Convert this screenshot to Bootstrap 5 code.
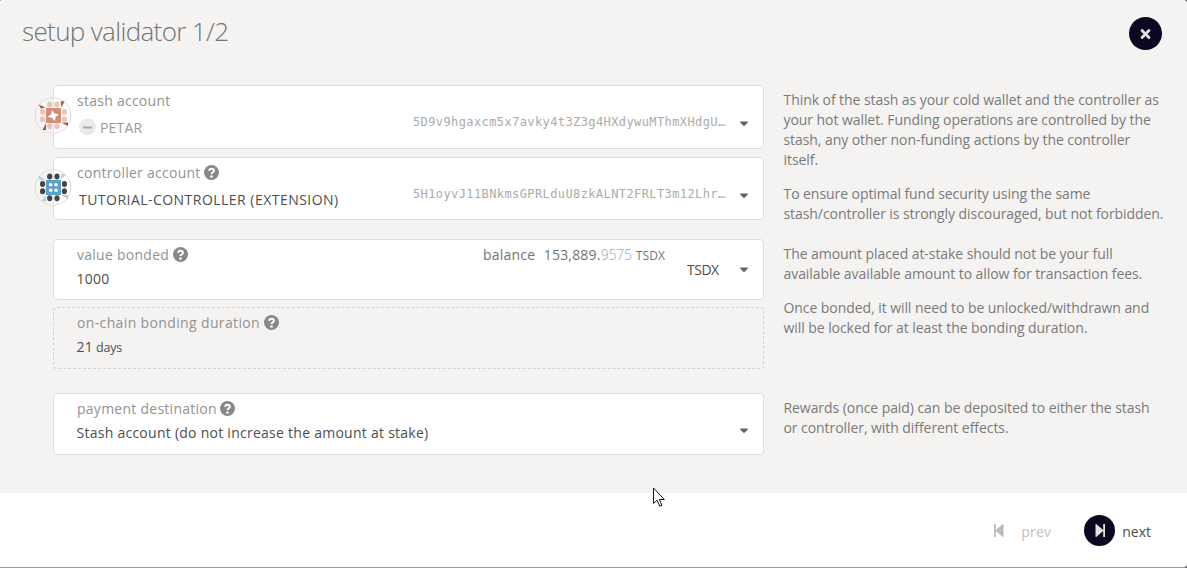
<!DOCTYPE html>
<html lang="en">
<head>
<meta charset="utf-8">
<meta name="viewport" content="width=device-width, initial-scale=1">
<title>setup validator 1/2</title>
<link rel="stylesheet" href="https://cdn.jsdelivr.net/npm/bootstrap@5.3.0/dist/css/bootstrap.min.css">
<style>
body{width:1187px;height:568px;overflow:hidden;font-family:"Open Sans","Noto Sans",sans-serif;font-size:14px;line-height:20px;color:#4e4e4e;background:#55525c}
.wizard{height:568px;border-bottom:1px solid #999;background:#fff;border-radius:2px 4px 4px 0;overflow:hidden}
.wizard-body{height:493px;background:#f4f3f2}
.wizard-head{height:85px;padding:14px 25px 0 22px}
.wizard-head h1{font-size:26px;font-weight:300;line-height:34px;letter-spacing:-.65px;color:#737373}
.round-btn{border:0;padding:0;border-radius:50%;background:#0d0821;display:flex;align-items:center;justify-content:center;flex:none}
.btn-close-round{width:33px;height:33px;margin-top:3px}
.btn-next{width:31px;height:31px}
.form-row{padding-left:53px;gap:19.500px}
.form-tall{height:154px}
.fields{width:711px;flex:none;letter-spacing:.26px}
.field{position:relative;background:#fff;border:1px solid #dededf;border-radius:4px;padding:5px 0 0 23px}
.h64{height:64px}.h63{height:63px}.h62{height:62px}.h61{height:61px}
.field.dashed{background:transparent;border:1px dashed #d2d2d1}
.fld-label{color:#929292;height:20px;gap:4px}
.fld-label svg{position:relative;top:-1px;left:-.5px}
.fld-value{margin:4px 0 0 -.5px}
.account{margin:7px 0 0 2px;letter-spacing:.47px}
.petar{height:20px;gap:4px;color:#9a9a9a;letter-spacing:.2px}
.on-chain{letter-spacing:.36px}
.help-txt{color:#7a7a7a;letter-spacing:-.065px;padding-top:5px}
.help-txt p{margin:0 0 14px;white-space:nowrap}
.ident{position:absolute;left:-20px;top:10px}
.caret{position:absolute;right:15px;width:8px;height:5px}
.caret-acct{top:35px}.caret-unit{top:27px}.caret-pay{top:34px}
.addr{position:absolute;left:359px;top:26px;font-family:"DejaVu Sans Mono",monospace;font-size:12px;letter-spacing:.4px;color:#ababab;white-space:nowrap}
.bal{position:absolute;left:429px;top:5px;color:#747474;white-space:nowrap;letter-spacing:.2px}
.bal .whole{margin-left:8.500px}
.bal .frac{color:#a6a6a6;font-weight:300;letter-spacing:-.2px}
.bal .tok{font-size:12px;margin-left:4px;letter-spacing:.1px}
.unit{position:absolute;left:633px;top:20px;letter-spacing:-.5px}
.days{font-size:12.500px;margin-left:3px;letter-spacing:-.2px}
.wizard-foot{height:74px;padding-right:36px}
.prev-txt{color:#c0c0c0;margin:3px 33px 0 16px;letter-spacing:.2px}
.next-txt{margin:3px 0 0 7px}
.cursor{position:absolute;left:653px;top:487px}
</style>
</head>
<body>
<svg class="d-none">
  <symbol id="help" viewBox="0 0 16 16"><circle cx="8" cy="8" r="8" fill="#888"/><path d="M5.500 6.300C5.600 4.600 6.600 4 8 4s2.600.7 2.600 2.200C10.600 7.900 8 7.700 8 9.500" fill="none" stroke="#fff" stroke-width="2.100"/><circle cx="8" cy="12.200" r="1.350" fill="#fff"/></symbol>
  <symbol id="caret" viewBox="0 0 8 5"><path fill="#666" d="M.5.500h7q.8.500 0 1.200L5 4.500q-1 .6-2 0L.5 1.700Q-.3 1 .5.500z"/></symbol>
  <symbol id="dots" viewBox="34 96 38 38"><ellipse cx="49.700" cy="104.500" rx="2.600" ry="3"/><ellipse cx="57" cy="104.500" rx="2.600" ry="3"/><ellipse cx="49.700" cy="126.300" rx="2.600" ry="3"/><ellipse cx="57" cy="126.300" rx="2.600" ry="3"/><ellipse cx="42.600" cy="112" rx="2.600" ry="3"/><ellipse cx="42.600" cy="119.200" rx="2.600" ry="3"/><ellipse cx="64.400" cy="112" rx="2.600" ry="3"/><ellipse cx="64.400" cy="119.200" rx="2.600" ry="3"/></symbol>
</svg>
<main class="wizard d-flex flex-column position-relative">
<div class="wizard-body">
  <header class="wizard-head d-flex justify-content-between align-items-start">
    <h1 class="m-0">setup validator 1/2</h1>
    <button class="round-btn btn-close-round" aria-label="close"><svg width="13" height="12" viewBox="0 0 13 12"><path d="M3 2.400 10 9.600M10 2.400 3 9.600" stroke="#e2e1e4" stroke-width="2.800" stroke-linecap="round"/></svg></button>
  </header>

  <section class="form-row form-tall d-flex">
    <div class="fields d-flex flex-column gap-2">
      <div class="field h64">
        <svg class="ident" width="38" height="38" viewBox="34 96 38 38"><circle cx="53" cy="115.500" r="17.800" fill="#fff" fill-opacity=".2" stroke="#dcdcdc"/><g fill="#a9553c"><path d="M38.500 104.500 45.500 107.500l-4.500.9zM60.700 101.200h3.800l-3 6.300zM68 122.600v3.500l-6.500-3.300zM42.500 130l3.500-7v7z"/></g><use href="#dots" x="34" y="96" width="38" height="38" fill="#e9c4ba"/><path fill="#d58c78" d="M46 108h15v15H46z"/><path fill="#fff" d="m52 110.200 2.400 3 4.400 1.400-3 2.200-1.200 4.200-2.500-3-4.400-1.200 3.200-2.200z"/></svg>
        <div class="fld-label d-flex align-items-center"><span>stash account</span></div>
        <div class="account petar d-flex align-items-center"><svg width="17" height="18" viewBox="0 0 17 18"><circle cx="8.500" cy="8" r="8.500" fill="#eae9e8"/><path d="M4 8.500h9" stroke="#aaa" stroke-width="2"/></svg><span>PETAR</span></div>
        <div class="addr">5D9v9hgaxcm5x7avky4t3Z3g4HXdywuMThmXHdgU…</div>
        <svg class="caret caret-acct"><use href="#caret"/></svg>
      </div>
      <div class="field h63">
        <svg class="ident" width="38" height="38" viewBox="34 96 38 38"><circle cx="53" cy="115.500" r="17.800" fill="#fff" fill-opacity=".2" stroke="#dcdcdc"/><g fill="#acd2e7"><path d="M39 103.500v4l6.500.4zM60.500 107.500l1-5.500h3.500v1.500zM61.500 123h6.500v4.500zM41.500 129l4.500-5.500v6z"/></g><use href="#dots" x="34" y="96" width="38" height="38" fill="#454545"/><path fill="#5aa2c9" d="M46 108h15v15H46z"/><g fill="#fff"><circle cx="50.700" cy="112.800" r="1.800"/><circle cx="56" cy="112.800" r="1.800"/><circle cx="50.700" cy="118.200" r="1.800"/><circle cx="56" cy="118.200" r="1.800"/></g></svg>
        <div class="fld-label d-flex align-items-center"><span>controller account</span><svg width="15" height="15"><use href="#help"/></svg></div>
        <div class="account">TUTORIAL-CONTROLLER (EXTENSION)</div>
        <div class="addr">5H1oyvJ11BNkmsGPRLduU8zkALNT2FRLT3m12Lhr…</div>
        <svg class="caret caret-acct"><use href="#caret"/></svg>
      </div>
    </div>
    <div class="help-txt">
      <p>Think of the stash as your cold wallet and the controller as<br>your hot wallet. Funding operations are controlled by the<br>stash, any other non-funding actions by the controller<br>itself.</p>
      <p>To ensure optimal fund security using the same<br>stash/controller is strongly discouraged, but not forbidden.</p>
    </div>
  </section>

  <section class="form-row form-tall d-flex">
    <div class="fields d-flex flex-column" style="gap:7px">
      <div class="field h61">
        <div class="fld-label d-flex align-items-center"><span>value bonded</span><svg width="15" height="15"><use href="#help"/></svg></div>
        <div class="fld-value">1000</div>
        <div class="bal"><span>balance</span><span class="whole">153,889.</span><span class="frac">9575</span><span class="tok">TSDX</span></div>
        <div class="unit">TSDX</div>
        <svg class="caret caret-unit"><use href="#caret"/></svg>
      </div>
      <div class="field dashed h62">
        <div class="fld-label on-chain d-flex align-items-center"><span>on-chain bonding duration</span><svg width="15" height="15"><use href="#help"/></svg></div>
        <div class="fld-value">21<span class="days">days</span></div>
      </div>
    </div>
    <div class="help-txt">
      <p>The amount placed at-stake should not be your full<br>available available amount to allow for transaction fees.</p>
      <p>Once bonded, it will need to be unlocked/withdrawn and<br>will be locked for at least the bonding duration.</p>
    </div>
  </section>

  <section class="form-row d-flex">
    <div class="fields">
      <div class="field h62">
        <div class="fld-label d-flex align-items-center"><span>payment destination</span><svg width="15" height="15"><use href="#help"/></svg></div>
        <div class="fld-value">Stash account (do not increase the amount at stake)</div>
        <svg class="caret caret-pay"><use href="#caret"/></svg>
      </div>
    </div>
    <div class="help-txt">
      <p>Rewards (once paid) can be deposited to either the stash<br>or controller, with different effects.</p>
    </div>
  </section>
</div>
<footer class="wizard-foot d-flex justify-content-end align-items-center">
  <svg width="12" height="15" viewBox="0 0 12 15"><path fill="#bbb" d="M1 1h1.800v6L9.500 1.200q1-.7 1 .5v11.600q0 1.200-1 .5L2.800 8v6H1z"/></svg>
  <span class="prev-txt">prev</span>
  <button class="round-btn btn-next" aria-label="next"><svg width="12" height="15" viewBox="0 0 12 15"><path fill="#e2e1e4" d="M11 1H9.200v6L2.500 1.200q-1-.7-1 .5v11.600q0 1.200 1 .5L9.200 8v6H11z"/></svg></button>
  <span class="next-txt">next</span>
</footer>
<svg class="cursor" width="14" height="22" viewBox="0 0 14 22"><path d="M.5 1v15.500l3.500-3.300 2.800 6 2.200-1-2.700-5.700h5z" fill="#fff" stroke="#111" stroke-width="1"/></svg>
</main>
<script src="https://cdn.jsdelivr.net/npm/bootstrap@5.3.0/dist/js/bootstrap.bundle.min.js"></script>
</body>
</html>
